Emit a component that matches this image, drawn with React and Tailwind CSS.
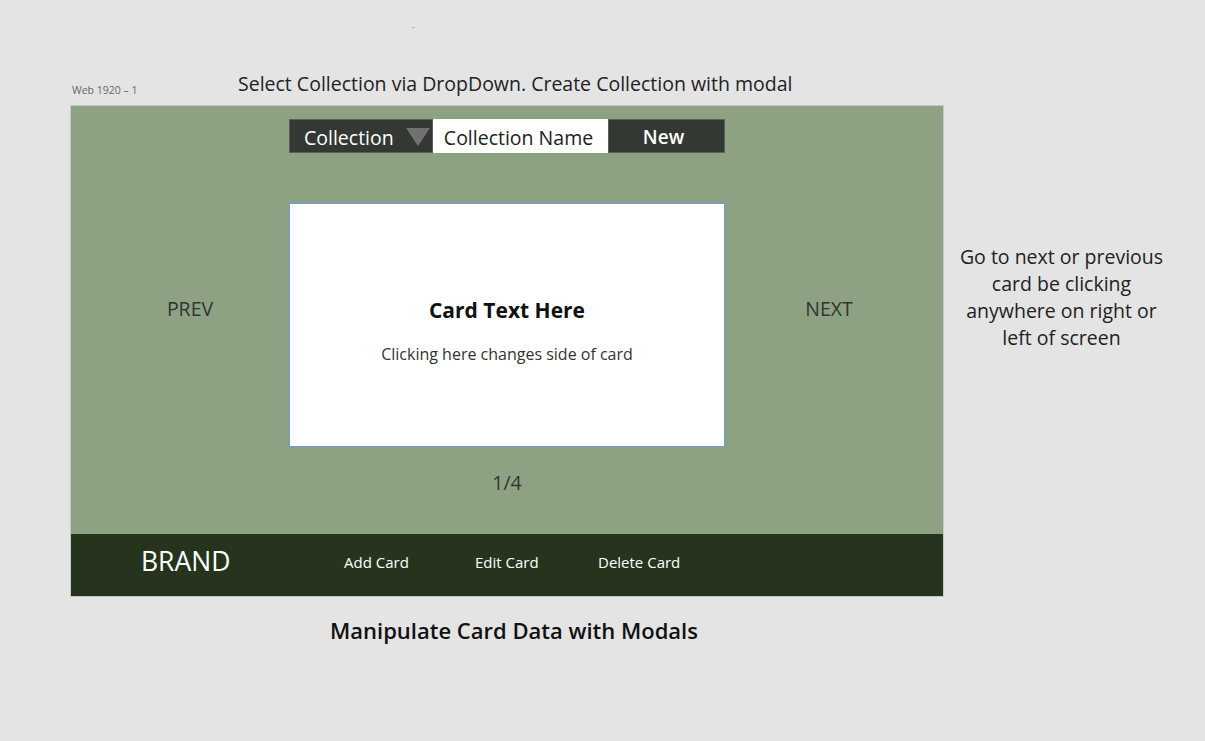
export default function App() {
  const font = { fontFamily: '"Open Sans", "Noto Sans", sans-serif' };
  return (
    <div className="w-[1205px] h-[741px] bg-[#e4e4e4] flex text-[#222]" style={font}>
      <div className="ml-[70px] w-[874px] flex flex-col">
        <div className="h-[27px] relative">
          <div className="absolute left-[342px] top-[27px] w-[3px] h-[1px] bg-[#b5b5b5]" />
        </div>
        <div className="h-[78px] flex items-end relative">
          <div className="text-[10.5px] text-[#666] leading-none pb-[10px] pl-[2px] w-[168px]">Web 1920 – 1</div>
          <div className="text-[19.5px] leading-none pb-[12px] text-[#222] whitespace-nowrap">Select Collection via DropDown. Create Collection with modal</div>
        </div>
        <div className="h-[492px] flex flex-col border border-[#c8c8c8]">
          <div className="flex-1 bg-[#8ca283] flex">
            <div className="w-[218px] flex items-center justify-center pl-[20px] pb-[22px]">
              <span className="text-[19.5px] text-[#333]">PREV</span>
            </div>
            <div className="w-[436px] flex flex-col">
              <div className="mt-[13px] h-[34px] flex">
                <div className="w-[144px] bg-[#333833] border border-[#5b5f5b] flex items-center pl-[14px] gap-[12px]">
                  <span className="text-white text-[19.5px] pt-[3px]">Collection</span>
                  <svg width="24" height="20" viewBox="0 0 24 20" className="mt-[2px]"><polygon points="0,1 24,1 12,19" fill="#717171" /></svg>
                </div>
                <div className="w-[175px] bg-white flex items-center justify-center pr-[4px]">
                  <span className="text-[19.5px] text-[#222] pt-[3px]">Collection Name</span>
                </div>
                <div className="w-[117px] bg-[#333833] border border-[#5b5f5b] flex items-center justify-center pr-[6px]">
                  <span className="text-white text-[19px] font-semibold pt-[3px]">New</span>
                </div>
              </div>
              <div className="mt-[50px] h-[244px] bg-white border border-[#6c9be0] flex flex-col items-center">
                <div className="mt-[92px] text-[21px] font-bold text-[#111] leading-[28px]">Card Text Here</div>
                <div className="mt-[19px] text-[16px] text-[#333] leading-[22px]">Clicking here changes side of card</div>
              </div>
              <div className="mt-[23px] text-center text-[19.5px] text-[#333] leading-[26px]">1/4</div>
            </div>
            <div className="flex-1 flex items-center justify-center pr-[10px] pb-[22px]">
              <span className="text-[19.5px] text-[#333]">NEXT</span>
            </div>
          </div>
          <div className="h-[62px] bg-[#26341e] flex items-center pb-[5px]">
            <div className="ml-[70px] text-white text-[26.5px] w-[203px] -mt-[2px]">BRAND</div>
            <div className="text-white text-[15px] w-[131px]">Add Card</div>
            <div className="text-white text-[15px] w-[123px]">Edit Card</div>
            <div className="text-white text-[15px]">Delete Card</div>
          </div>
        </div>
        <div className="mt-[17px] pl-[260px] text-[22px] font-semibold text-[#111] whitespace-nowrap">Manipulate Card Data with Modals</div>
      </div>
      <div className="flex-1 flex justify-center pt-[243px] pr-[26px]">
        <div className="w-[212px] text-center text-[19.5px] leading-[27px] text-[#222]">
          Go to next or previous card be clicking anywhere on right or left of screen
        </div>
      </div>
    </div>
  );
}
